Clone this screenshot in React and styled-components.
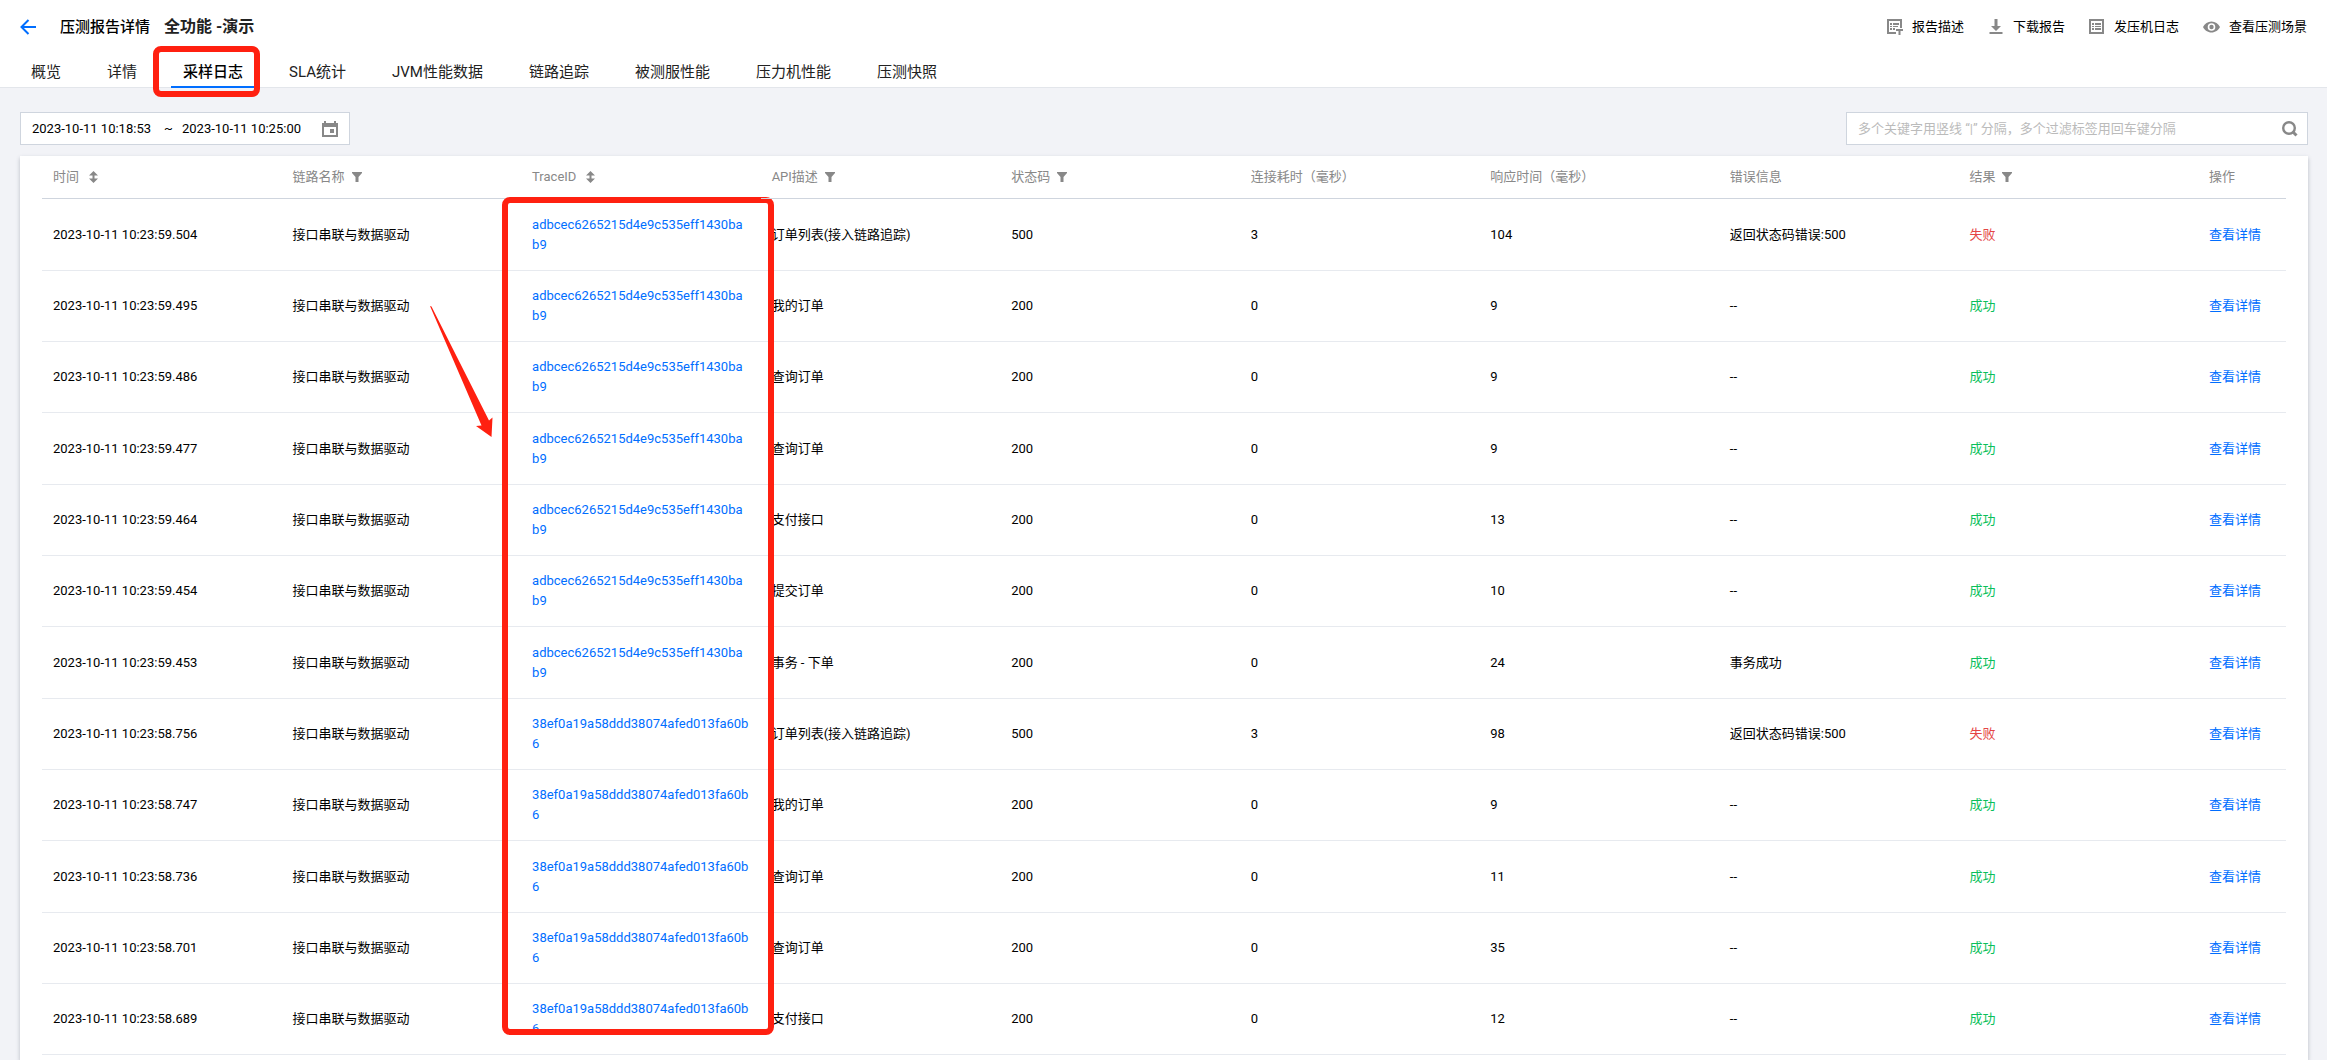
import React, { useState } from "react";
import styled, { createGlobalStyle, css } from "styled-components";

const GlobalStyle = createGlobalStyle`
  * {
    box-sizing: border-box;
  }
  body {
    margin: 0;
    background: #f2f3f7;
    color: #000;
    font-family: Roboto, "Noto Sans CJK SC", sans-serif;
    font-size: 13px;
    line-height: 20px;
  }
  button,
  input {
    font: inherit;
    color: inherit;
  }
  button {
    padding: 0;
    border: 0;
    background: none;
    cursor: pointer;
  }
  a {
    color: #006eff;
    text-decoration: none;
  }
  svg {
    display: block;
    flex: none;
  }
`;

const Page = styled.div`
  min-height: 100vh;
  display: flex;
  flex-direction: column;
`;

const Header = styled.header`
  background: #fff;
  box-shadow: inset 0 -1px 0 #e3e6eb;
`;

const TitleBar = styled.div`
  display: flex;
  align-items: center;
  height: 54px;
  padding: 0 20px;
`;

const BackButton = styled.button`
  margin-right: 24px;
  color: #006eff;
`;

const PageTitle = styled.h1`
  margin: 0 14px 0 0;
  font-size: 15px;
  font-weight: 500;
`;

const ReportName = styled.h2`
  margin: 0;
  font-size: 16px;
  font-weight: 700;
  color: #222;
`;

const Actions = styled.div`
  display: flex;
  gap: 24px;
  margin-left: auto;
`;

const ActionButton = styled.button`
  display: flex;
  align-items: center;
  gap: 9px;
  svg {
    color: #888;
  }
`;

const Tabs = styled.nav`
  display: flex;
  gap: 22px;
  padding: 0 19px;
`;

const Tab = styled.button`
  position: relative;
  height: 34px;
  padding: 4px 12px 0;
  border-bottom: 2px solid transparent;
  font-size: 15px;
  color: #222;
  white-space: nowrap;
  ${(props) =>
    props.$active &&
    css`
      color: #000;
      font-weight: 500;
      border-bottom-color: #006eff;
    `}
`;

const Mark = styled.span`
  position: absolute;
  border: 6px solid #ff2010;
  border-radius: 8px;
  pointer-events: none;
`;

const TabMark = styled(Mark)`
  inset: -8px -5px -11px -18px;
`;

const ColumnMark = styled(Mark)`
  top: 41px;
  left: -19px;
  right: -13px;
  height: 838px;
`;

const ArrowMark = styled.svg`
  position: absolute;
  top: 149px;
  left: -92px;
  pointer-events: none;
`;

const Content = styled.main`
  flex: 1;
  display: flex;
  flex-direction: column;
  padding: 24px 19px 0 20px;
`;

const Toolbar = styled.div`
  display: flex;
  justify-content: space-between;
  margin-bottom: 11px;
`;

const Field = styled.div`
  display: flex;
  align-items: center;
  height: 33px;
  padding: 0 11px;
  border: 1px solid #cfd5de;
  background: #fff;
  color: #000;
  svg {
    color: #888;
  }
  input {
    min-width: 0;
    padding: 0;
    border: 0;
    outline: none;
    background: none;
  }
  input::placeholder {
    color: #bbb;
    opacity: 1;
  }
`;

const DateField = styled(Field)`
  width: 330px;
  input {
    width: 132px;
  }
  span {
    width: 18px;
  }
  button {
    margin-left: auto;
  }
`;

const SearchField = styled(Field)`
  width: 462px;
  padding-right: 9px;
  input {
    flex: 1;
  }
`;

const Card = styled.section`
  flex: 1;
  padding: 0 22px;
  background: #fff;
  box-shadow: 0 2px 4px rgba(54, 58, 80, 0.3);
`;

const Table = styled.table`
  width: 100%;
  table-layout: fixed;
  border-collapse: separate;
  border-spacing: 0;
  th,
  td {
    padding: 0 11px;
    text-align: left;
    font-weight: 400;
    word-break: break-all;
  }
  th {
    position: relative;
    height: 43px;
    color: #888;
    border-bottom: 1px solid #cfd5de;
  }
  th:last-child {
    width: 88px;
  }
  td {
    height: 71px;
    border-bottom: 1px solid #e7eaef;
  }
  tr:nth-child(3n + 1) td {
    height: 72px;
  }
`;

const HeadLabel = styled.div`
  display: flex;
  align-items: center;
  gap: ${(props) => (props.$sort ? "10px" : "7px")};
`;

const Result = styled.span`
  color: ${(props) => (props.$failed ? "#e54545" : "#0abf5b")};
`;

const BackIcon = () => (
  <svg width="16" height="16" viewBox="0 0 16 16" fill="none" stroke="currentColor" strokeWidth="2">
    <path d="M8.500 1 1.500 8l7 7M1.500 8H16" />
  </svg>
);

const DescribeIcon = () => (
  <svg width="16" height="16" viewBox="0 0 16 16" fill="currentColor">
    <path d="M0 0h15v9h-2V2H2v11h7v2H0z" />
    <path d="M3 4h2v2H3zM6 4h6v2H6zM3 7h2v1H3zM6 7h5v1H6zM3 9h2v2H3zM6 9h2v2H6z" />
    <path d="M9 10h7v2h-2.500v4h-2v-4H9z" />
  </svg>
);

const DownloadIcon = () => (
  <svg width="16" height="16" viewBox="0 0 16 16" fill="currentColor">
    <path d="M6.500 0h3v7H13l-5 5-5-5h3.500zM1.500 13h13v2h-13z" />
  </svg>
);

const LogIcon = () => (
  <svg width="16" height="16" viewBox="0 0 16 16" fill="currentColor">
    <path fillRule="evenodd" d="M0 0h15v15H0zM2 2v11h11V2z" />
    <path d="M3 4h2v2H3zM6 4h6v2H6zM3 7h2v1H3zM6 7h6v1H6zM3 9h2v2H3zM6 9h6v2H6z" />
  </svg>
);

const EyeIcon = () => (
  <svg width="17" height="16" viewBox="0 0 17 16" fill="currentColor">
    <path
      fillRule="evenodd"
      d="M8.500 2.500C4.800 2.500 1.700 4.800 0 8c1.700 3.200 4.800 5.500 8.500 5.500S15.300 11.200 17 8c-1.700-3.200-4.800-5.500-8.500-5.500zm0 1.700a3.800 3.800 0 1 1 0 7.600 3.800 3.800 0 0 1 0-7.600z"
    />
    <circle cx="8.500" cy="8" r="2.200" />
  </svg>
);

const CalendarIcon = () => (
  <svg width="16" height="16" viewBox="0 0 16 16" fill="currentColor">
    <path fillRule="evenodd" d="M2 0h2v2h8V0h2v2h2v14H0V2h2zM2 6v8h12V6z" />
    <path d="M8 8h4v4H8z" />
  </svg>
);

const SearchIcon = () => (
  <svg width="16" height="16" viewBox="0 0 16 16" fill="none" stroke="currentColor">
    <circle cx="7" cy="7" r="5.800" strokeWidth="2.400" />
    <path d="m10.500 10.500 4 4" strokeWidth="3" />
  </svg>
);

const SortIcon = () => (
  <svg width="9" height="12" viewBox="0 0 9 12" fill="currentColor">
    <path d="M4.500 0 9 4.500H5.500v3H9L4.500 12 0 7.500h3.500v-3H0z" />
  </svg>
);

const FilterIcon = () => (
  <svg width="10" height="10" viewBox="0 0 10 10" fill="currentColor">
    <path d="M0 0h10v1L6.500 5v5h-3V5L0 1z" />
  </svg>
);

const actions = [
  { label: "报告描述", Icon: DescribeIcon },
  { label: "下载报告", Icon: DownloadIcon },
  { label: "发压机日志", Icon: LogIcon },
  { label: "查看压测场景", Icon: EyeIcon },
];

const tabs = [
  "概览",
  "详情",
  "采样日志",
  "SLA统计",
  "JVM性能数据",
  "链路追踪",
  "被测服性能",
  "压力机性能",
  "压测快照",
];

const columns = [
  { title: "时间", sort: true },
  { title: "链路名称", filter: true },
  { title: "TraceID", sort: true, marked: true },
  { title: "API描述", filter: true },
  { title: "状态码", filter: true },
  { title: "连接耗时（毫秒）" },
  { title: "响应时间（毫秒）" },
  { title: "错误信息" },
  { title: "结果", filter: true },
  { title: "操作" },
];

const TRACE_A = "adbcec6265215d4e9c535eff1430bab9";
const TRACE_B = "38ef0a19a58ddd38074afed013fa60b6";

// time, trace, api, status, connect, response, message
const logs = [
  ["59.504", TRACE_A, "订单列表(接入链路追踪)", 500, 3, 104, "返回状态码错误:500"],
  ["59.495", TRACE_A, "我的订单", 200, 0, 9, "--"],
  ["59.486", TRACE_A, "查询订单", 200, 0, 9, "--"],
  ["59.477", TRACE_A, "查询订单", 200, 0, 9, "--"],
  ["59.464", TRACE_A, "支付接口", 200, 0, 13, "--"],
  ["59.454", TRACE_A, "提交订单", 200, 0, 10, "--"],
  ["59.453", TRACE_A, "事务 - 下单", 200, 0, 24, "事务成功"],
  ["58.756", TRACE_B, "订单列表(接入链路追踪)", 500, 3, 98, "返回状态码错误:500"],
  ["58.747", TRACE_B, "我的订单", 200, 0, 9, "--"],
  ["58.736", TRACE_B, "查询订单", 200, 0, 11, "--"],
  ["58.701", TRACE_B, "查询订单", 200, 0, 35, "--"],
  ["58.689", TRACE_B, "支付接口", 200, 0, 12, "--"],
];

function LogTable() {
  return (
    <Table>
      <thead>
        <tr>
          {columns.map(({ title, sort, filter, marked }) => (
            <th key={title}>
              <HeadLabel $sort={sort}>
                {title}
                {sort && <SortIcon />}
                {filter && <FilterIcon />}
              </HeadLabel>
              {marked && (
                <>
                  <ColumnMark />
                  <ArrowMark width="66" height="134" viewBox="0 0 66 134" fill="#ff2010">
                    <path d="M1 1 2.500 1.500 60 115.500 63.500 112.500 62.500 132 47 121 52.500 120.500z" />
                  </ArrowMark>
                </>
              )}
            </th>
          ))}
        </tr>
      </thead>
      <tbody>
        {logs.map(([time, trace, api, status, connect, response, message]) => (
          <tr key={time}>
            <td>2023-10-11 10:23:{time}</td>
            <td>接口串联与数据驱动</td>
            <td>
              <a href="#trace">{trace}</a>
            </td>
            <td>{api}</td>
            <td>{status}</td>
            <td>{connect}</td>
            <td>{response}</td>
            <td>{message}</td>
            <td>
              <Result $failed={status !== 200}>{status === 200 ? "成功" : "失败"}</Result>
            </td>
            <td>
              <a href="#detail">查看详情</a>
            </td>
          </tr>
        ))}
      </tbody>
    </Table>
  );
}

function App() {
  const [activeTab, setActiveTab] = useState("采样日志");
  const [keyword, setKeyword] = useState("");

  return (
    <Page>
      <GlobalStyle />
      <Header>
        <TitleBar>
          <BackButton aria-label="返回">
            <BackIcon />
          </BackButton>
          <PageTitle>压测报告详情</PageTitle>
          <ReportName>全功能 -演示</ReportName>
          <Actions>
            {actions.map(({ label, Icon }) => (
              <ActionButton key={label}>
                <Icon />
                {label}
              </ActionButton>
            ))}
          </Actions>
        </TitleBar>
        <Tabs>
          {tabs.map((tab) => (
            <Tab key={tab} $active={tab === activeTab} onClick={() => setActiveTab(tab)}>
              {tab}
              {tab === "采样日志" && <TabMark />}
            </Tab>
          ))}
        </Tabs>
      </Header>
      <Content>
        <Toolbar>
          <DateField>
            <input aria-label="开始时间" defaultValue="2023-10-11 10:18:53" />
            <span>~</span>
            <input aria-label="结束时间" defaultValue="2023-10-11 10:25:00" />
            <button aria-label="选择时间">
              <CalendarIcon />
            </button>
          </DateField>
          <SearchField>
            <input
              aria-label="搜索"
              placeholder="多个关键字用竖线 “|” 分隔，多个过滤标签用回车键分隔"
              value={keyword}
              onChange={(e) => setKeyword(e.target.value)}
            />
            <button aria-label="搜索日志">
              <SearchIcon />
            </button>
          </SearchField>
        </Toolbar>
        <Card>
          <LogTable />
        </Card>
      </Content>
    </Page>
  );
}

export default App;
